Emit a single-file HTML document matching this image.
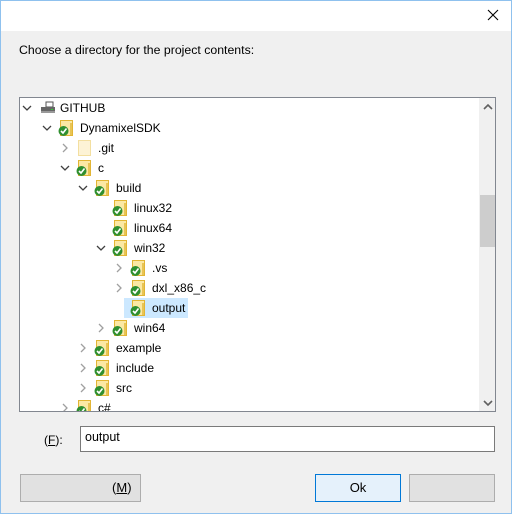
<!DOCTYPE html><html><head><style>
body{margin:0;width:512px;height:514px;background:#f0f0f0;font-family:"Liberation Sans",sans-serif;font-size:12px;color:#000;position:relative;overflow:hidden}
.a{position:absolute}
.row{position:absolute;height:20px;line-height:20px;white-space:nowrap}
.btn{position:absolute;height:26px;background:#e1e1e1;border:1px solid #adadad;text-align:center;line-height:26px;font-size:13px}
</style></head><body>
<div class="a" style="left:0;top:0;width:510px;height:30px;background:#fff;border:1px solid #8fc1ee;border-bottom:none"></div>
<div class="a" style="left:0;top:30px;width:1px;height:484px;background:#8fc1ee"></div>
<div class="a" style="left:511px;top:0;width:1px;height:514px;background:#8fc1ee"></div>
<div class="a" style="left:0;top:513px;width:512px;height:1px;background:#8fc1ee"></div>
<svg class="a" style="left:487px;top:9px" width="12" height="12"><path d="M1 1L11 11M11 1L1 11" stroke="#000" stroke-width="1.1"/></svg>
<div class="a" style="left:19px;top:43px;font-size:12.3px">Choose a directory for the project contents:</div>
<div class="a" style="left:19px;top:97px;width:475px;height:313px;background:#fff;border:1px solid #828790;overflow:hidden">
<div class="a" style="left:459px;top:0;width:17px;height:313px;background:#f0f0f0"></div>
<div class="a" style="left:460px;top:97px;width:15px;height:52px;background:#cdcdcd"></div>
<svg class="a" style="left:463px;top:5px" width="10" height="8"><path d="M1 6L5 2L9 6" stroke="#606060" stroke-width="1.6" fill="none"/></svg>
<svg class="a" style="left:463px;top:301px" width="10" height="8"><path d="M1 2L5 6L9 2" stroke="#606060" stroke-width="1.6" fill="none"/></svg>
<div id="t"></div>
</div>
<div class="a" style="left:44px;top:433px">(<u>F</u>):</div>
<div class="a" style="left:80px;top:426px;width:413px;height:24px;border:1px solid #7a7a7a;background:#fff"><span style="position:absolute;left:4px;top:3px;font-size:12.5px">output</span></div>
<div class="btn" style="left:20px;top:474px;width:119px"><span style="position:absolute;left:91px">(<u>M</u>)</span></div>
<div class="btn" style="left:315px;top:474px;width:84px;background:#e5f1fb;border-color:#0078d7">Ok</div>
<div class="btn" style="left:409px;top:474px;width:84px"></div>
<script>
var rows=[["GITHUB",0,"d",1],["DynamixelSDK",1,"d",0],[".git",2,"r",2],["c",2,"d",0],["build",3,"d",0],["linux32",4,"",0],["linux64",4,"",0],["win32",4,"d",0],[".vs",5,"r",0],["dxl_x86_c",5,"r",0],["output",5,"",0,1],["win64",4,"r",0],["example",3,"r",0],["include",3,"r",0],["src",3,"r",0],["c#",2,"r",0]];
var h="";
rows.forEach(function(r,i){
 var y=i*20,L=r[1],cx=8+18*L,ix=20+18*L,tx=ix+22;
 if(L==0){cx=6;ix=20;tx=40}
 var s='';
 if(r[4])s+='<div class="a" style="left:'+(ix-6)+'px;top:'+y+'px;width:'+(tx+42-ix)+'px;height:20px;background:#cce8ff"></div>';
 if(r[2]=="d")s+='<svg class="a" style="left:'+(cx-4)+'px;top:'+(y+7)+'px" width="10" height="6"><path d="M1 1L5 5L9 1" stroke="#404040" stroke-width="1.3" fill="none"/></svg>';
 if(r[2]=="r")s+='<svg class="a" style="left:'+(cx-2)+'px;top:'+(y+5)+'px" width="6" height="10"><path d="M1 1L5 5L1 9" stroke="#a0a0a0" stroke-width="1.3" fill="none"/></svg>';
 if(r[3]==1)s+='<svg class="a" style="left:'+ix+'px;top:'+(y+3)+'px" width="16" height="14"><rect x="6" y="1" width="7" height="5" fill="#fff" stroke="#555"/><rect x="1" y="6" width="14" height="6" fill="#666"/><rect x="1" y="10" width="14" height="2" fill="#999"/><rect x="11" y="8" width="2" height="1" fill="#3c3"/></svg>';
 else if(r[3]==2)s+='<svg class="a" style="left:'+(ix+2)+'px;top:'+(y+2)+'px" width="14" height="16"><rect x="0.5" y="0.5" width="12" height="15" fill="#fdf3d6" stroke="#f3dfa0"/></svg>';
 else s+='<svg class="a" style="left:'+ix+'px;top:'+(y+2)+'px" width="16" height="16"><rect x="2.5" y="0.5" width="12" height="15" fill="#fbe8a4" stroke="#e2b534"/><rect x="12" y="3" width="2" height="12" fill="#e8c455"/><circle cx="5.5" cy="11" r="5" fill="#2f8f2f"/><path d="M3 11L5 13L8.5 8.5" stroke="#fff" stroke-width="1.6" fill="none"/></svg>';
 s+='<div class="row" style="left:'+tx+'px;top:'+y+'px">'+r[0]+'</div>';
 h+=s;
});
document.getElementById('t').innerHTML=h;
</script>
</body></html>
